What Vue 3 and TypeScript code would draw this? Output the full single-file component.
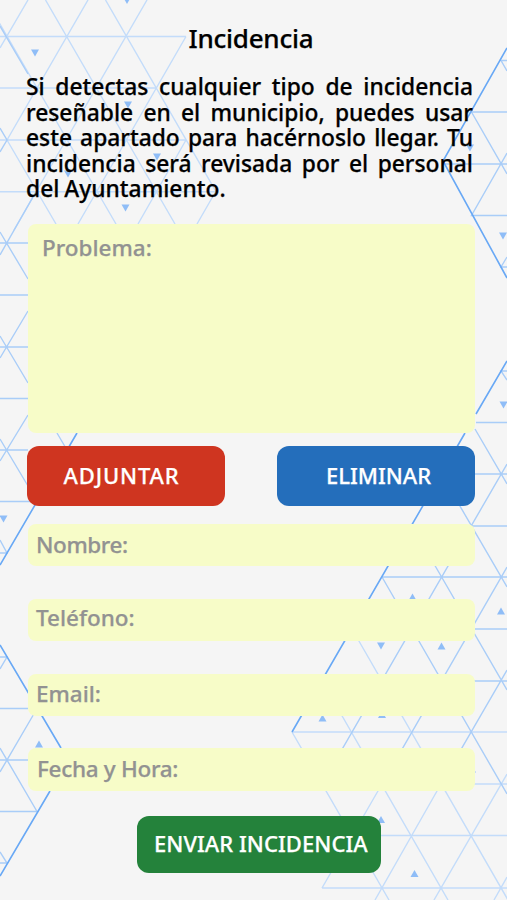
<script setup lang="ts">
import { ref } from 'vue'

interface Field {
  id: string
  label: string
}

const fields: Field[] = [
  { id: 'nombre', label: 'Nombre:' },
  { id: 'telefono', label: 'Teléfono:' },
  { id: 'email', label: 'Email:' },
  { id: 'fecha', label: 'Fecha y Hora:' },
]

const intro: string[] = [
  'Si detectas cualquier tipo de incidencia',
  'reseñable en el municipio, puedes usar',
  'este apartado para hacérnoslo llegar. Tu',
  'incidencia será revisada por el personal',
  'del Ayuntamiento.',
]

const problem = ref('Problema:')

// Triangular mesh behind the form, grouped by line strength.
const faint = [
  'M0 36.5H186M0 88H156M0 140H186M0 191.7H215',
  'M-14 0L116 224M45.500 0L175 224M105.500 0L216 191.700M7 140L56 224',
  'M28 0L0 48M88 0L7 140M147 0L14 230M186 36.500L78 224M186 140L138 224M216 191L197 224',
  'M322 835.500H507M322 888H507M322 784H507M292 732H507',
  'M292 732L389 900M322 681L448 900M352 629L508 900',
  'M382 784L322 888M441 784L375 900M507 774L434 900M507 877L494 900',
].join('')
const medium = [
  'M0 243H28M0 295H28M0 347H28M0 398.500H28M0 450H28M0 501.500H35',
  'M0 26L28 74M0 128L7 140L0 152M0 232L28 279M36 191.700L0 255M0 336L28 383M28 311L0 358M0 439L28 486M28 415L0 461M57 433L67 450',
  'M0 540L7 553H0M0 657H7L0 669M0 708.500H28M35 712L0 772M0 748L37 811.500H0M0 760H28M0 852L7 863H0',
  'M507 60.500H501L507 71M507 112H471.500L507 174M444 164H507M507 153L471.500 215.500H507M507 257L501 267H507',
  'M507 371H501L507 380M476 422.500H507M475 429L507 484M475 474H507M507 464L322 784M457 501L507 587M471 526H507',
  'M382 577H507M352 629H507M322 681H507M382 577L507 794M430 557L507 690M507 567L382 784M507 670L441 784',
].join('')
const strong = [
  'M77 433L0 565M0 645L61 748M50 791L0 876',
  'M507 48L443 161L507 278M507 361L476 414M465 433L292 732',
].join('')

const down: [number, number][] = [
  [35, 53], [127, 0.5], [128, 105], [157, 157], [68, 174], [125.5, 208], [3.500, 519],
  [470, 148], [503, 236], [503.500, 405], [381, 646],
]
const up: [number, number][] = [
  [39, 744], [412.500, 597], [501, 611], [441.500, 646], [322.500, 718], [382, 714.500],
  [381, 819.500], [414.500, 873.500], [472, 769],
]
</script>

<template>
  <main class="screen">
    <svg class="mesh" viewBox="0 0 507 900" aria-hidden="true">
      <path class="line faint" :d="faint" />
      <path class="line medium" :d="medium" />
      <path class="line strong" :d="strong" />
      <path v-for="([x, y], i) in down" :key="'d' + i" class="tri" :d="`M${x - 4} ${y - 3.5}h8l-4 7z`" />
      <path v-for="([x, y], i) in up" :key="'u' + i" class="tri" :d="`M${x - 4} ${y + 3.5}h8l-4 -7z`" />
    </svg>

    <form class="form" @submit.prevent>
      <h1 class="title">Incidencia</h1>
      <p class="intro">
        <span v-for="(line, i) in intro" :key="i" class="intro-line">{{ line }}</span>
      </p>
      <div class="problem"><span class="label">{{ problem }}</span></div>
      <div class="actions">
        <button type="button" class="btn attach"><span>ADJUNTAR</span></button>
        <button type="button" class="btn remove"><span>ELIMINAR</span></button>
      </div>
      <div class="fields">
        <div v-for="f in fields" :key="f.id" class="field" :class="f.id">
          <span class="label">{{ f.label }}</span>
        </div>
      </div>
      <button type="submit" class="btn send"><span>ENVIAR INCIDENCIA</span></button>
    </form>
  </main>
</template>

<style>
body {
  margin: 0;
  background: #f5f5f5;
}
</style>

<style scoped>
.screen {
  position: relative;
  width: 507px;
  height: 900px;
  overflow: hidden;
  background: #f5f5f5;
  font-family: 'Noto Sans', 'Open Sans', sans-serif;
  font-weight: 500;
}
.mesh {
  position: absolute;
  inset: 0;
  width: 507px;
  height: 900px;
}
.line {
  fill: none;
  stroke-width: 1.4;
}
.faint { stroke: #c3dcfa; }
.medium { stroke: #a9cdf8; }
.strong { stroke: #68a8f5; stroke-width: 1.6; }
.tri { fill: #8fbdf7; }
.form {
  position: relative;
  display: flex;
  flex-direction: column;
  padding: 21px 32px 0 27px;
}
.title {
  margin: 0 0 0 161.5px;
  font-size: 26px;
  line-height: 34px;
  font-weight: 500;
  letter-spacing: -0.25px;
  color: #000;
  -webkit-text-stroke: 0.25px #000;
}
.intro {
  margin: 19px 2px 0 -1px;
  font-size: 22.8px;
  word-spacing: -1px;
  color: #000;
  -webkit-text-stroke: 0.25px #000;
}
.intro-line {
  display: block;
  height: 25.6px;
  line-height: 25.6px;
  white-space: nowrap;
  text-align: justify;
  text-align-last: justify;
}
.intro-line:last-child { text-align-last: left; }
.problem {
  box-sizing: border-box;
  height: 209px;
  margin: 22px 0 0 1px;
  padding: 9px 14px;
  border-radius: 8px;
  background: #f7fcc8;
}
.label {
  display: block;
  font-size: 22.5px;
  line-height: 30px;
  color: #929292;
  white-space: nowrap;
  -webkit-text-stroke: 0.25px #929292;
}
.actions {
  display: flex;
  justify-content: space-between;
  margin-top: 13.500px;
}
.btn {
  box-sizing: border-box;
  height: 60px;
  padding: 0 0 2px;
  border: 0;
  border-radius: 12px;
  font: inherit;
  font-size: 22px;
  line-height: 30px;
  color: #fff;
  text-align: left;
  white-space: nowrap;
  -webkit-text-stroke: 0.25px #fff;
}
.attach { width: 198px; padding-left: 36.5px; letter-spacing: 0.85px; background: #cf3520; }
.remove { width: 198px; padding-left: 49px; background: #246ebb; }
.fields {
  display: grid;
  gap: 32.500px;
  margin: 17.500px 0 0 1px;
}
.field {
  box-sizing: border-box;
  height: 42.300px;
  padding: 6px 8px;
  border-radius: 8px;
  background: #f7fcc8;
}
.nombre .label { letter-spacing: -0.4px; }
.telefono { padding-top: 4px; }
.email { padding-top: 5px; }
.fecha { padding-left: 9px; }
.fecha .label { letter-spacing: -0.3px; }
.send {
  width: 244px;
  height: 57px;
  margin: 25px 0 0 110px;
  padding-left: 17px;
  letter-spacing: 0.05px;
  background: #24823b;
}
</style>
